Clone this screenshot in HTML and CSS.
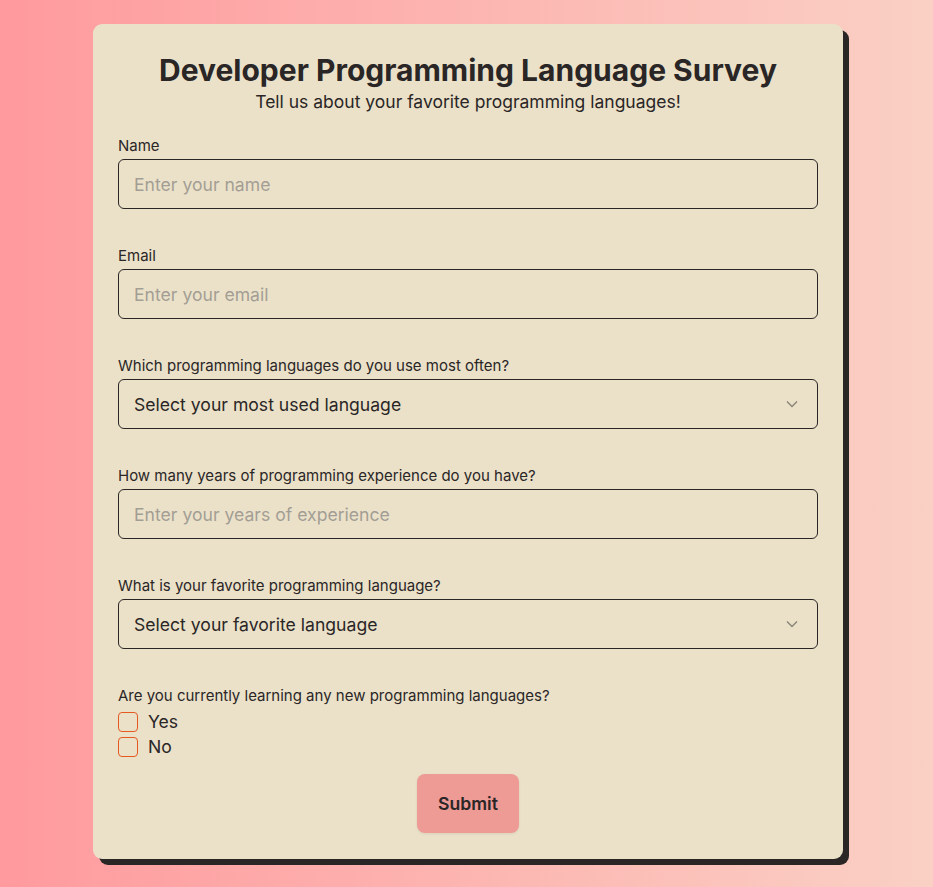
FILE: index.html
```html
<!DOCTYPE html>
<html lang="en">
<head>
<meta charset="utf-8">
<title>Developer Programming Language Survey</title>
<link rel="stylesheet" href="styles.css">
</head>
<body>
<main class="card">
  <h1 class="title">Developer Programming Language Survey</h1>
  <p class="subtitle">Tell us about your favorite programming languages!</p>
  <form class="form">
    <div class="field">
      <label class="label" for="name">Name</label>
      <input class="control" id="name" type="text" placeholder="Enter your name">
    </div>
    <div class="field">
      <label class="label" for="email">Email</label>
      <input class="control" id="email" type="email" placeholder="Enter your email">
    </div>
    <div class="field">
      <label class="label" for="most">Which programming languages do you use most often?</label>
      <div class="select-wrap">
        <select class="control select" id="most"><option>Select your most used language</option></select>
        <svg class="chevron" width="12" height="8" viewBox="0 0 12 8"><path d="M1 1.5 L6 6.5 L11 1.5" fill="none" stroke="#8a8478" stroke-width="1.4"/></svg>
      </div>
    </div>
    <div class="field">
      <label class="label" for="years">How many years of programming experience do you have?</label>
      <input class="control" id="years" type="text" placeholder="Enter your years of experience">
    </div>
    <div class="field">
      <label class="label" for="fav">What is your favorite programming language?</label>
      <div class="select-wrap">
        <select class="control select" id="fav"><option>Select your favorite language</option></select>
        <svg class="chevron" width="12" height="8" viewBox="0 0 12 8"><path d="M1 1.5 L6 6.5 L11 1.5" fill="none" stroke="#8a8478" stroke-width="1.4"/></svg>
      </div>
    </div>
    <div class="field field-last">
      <span class="label">Are you currently learning any new programming languages?</span>
      <label class="check"><span class="box"></span>Yes</label>
      <label class="check"><span class="box"></span>No</label>
    </div>
    <div class="actions">
      <button class="submit" type="button">Submit</button>
    </div>
  </form>
</main>
</body>
</html>
```
FILE: styles.css
```css
* { box-sizing: border-box; }
html, body { height: 100%; }
body {
  margin: 0;
  font-family: Inter, "Noto Sans", sans-serif;
  color: #2a2626;
  background: linear-gradient(90deg, #ff9a9e 0%, #fad0c4 100%);
  padding-top: 24px;
}
.card {
  width: 750px;
  margin: 0 0 0 93px;
  background: #ebe1c9;
  border-radius: 9px;
  box-shadow: 6px 6px 0 #2a2626;
  padding: 27px 25px 26px;
}
.title {
  margin: 0;
  text-align: center;
  font-size: 30px;
  font-weight: 700;
  line-height: 38px;
  color: #2a2626;
}
.subtitle {
  margin: 0;
  text-align: center;
  font-size: 17.5px;
  line-height: 26px;
  color: #2a2626;
}
.form {
  display: flex;
  flex-direction: column;
  margin-top: 22px;
}
.field {
  display: flex;
  flex-direction: column;
  margin-bottom: 38px;
}
.field-last { margin-bottom: 15px; }
.label {
  font-size: 15px;
  line-height: 18px;
  margin-bottom: 4px;
  color: #2a2626;
}
.control {
  width: 100%;
  height: 50px;
  border: 1px solid #2a2626;
  border-radius: 6px;
  background: transparent;
  font-family: Inter, "Noto Sans", sans-serif;
  font-size: 17.6px;
  color: #2a2626;
  padding: 0 15px;
  outline: none;
}
.control::placeholder { color: #a39e94; }
.select-wrap { position: relative; }
.select {
  appearance: none;
  -webkit-appearance: none;
}
.chevron {
  position: absolute;
  right: 20px;
  top: 21px;
  pointer-events: none;
}
.check {
  display: flex;
  align-items: center;
  gap: 10px;
  font-size: 17.6px;
  line-height: 25px;
  color: #2a2626;
}
.box {
  width: 20px;
  height: 20px;
  border: 1px solid #e4591e;
  border-radius: 4px;
}
.actions { display: flex; justify-content: center; }
.submit {
  width: 102px;
  height: 59px;
  border: none;
  border-radius: 8px;
  background: #ee9a95;
  font-family: Inter, "Noto Sans", sans-serif;
  font-size: 17.6px;
  font-weight: 600;
  color: #2a2626;
  box-shadow: 0 1px 3px rgba(0,0,0,0.08);
}
```
